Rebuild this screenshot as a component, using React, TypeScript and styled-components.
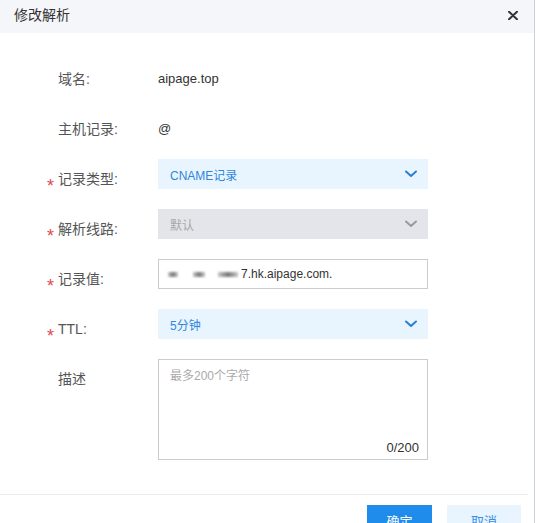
import React from "react";
import styled, { createGlobalStyle } from "styled-components";

const GlobalStyle = createGlobalStyle`
  html, body { margin: 0; padding: 0; background: #fff; }
  body {
    font-family: "Liberation Sans", "Noto Sans CJK SC", sans-serif;
    -webkit-font-smoothing: antialiased;
  }
  * { box-sizing: border-box; }
`;

const Dialog = styled.div`
  width: 535px;
  min-height: 523px;
  border-right: 1px solid #cfd0d2;
  background: #fff;
`;

const Header = styled.div`
  height: 33px;
  background: #f5f6fa;
  display: flex;
  align-items: center;
  justify-content: space-between;
  padding: 0 16px 3px 14px;
`;

const Title = styled.div`
  font-size: 14px;
  color: #333;
  line-height: 20px;
`;

const CloseButton = styled.button`
  width: 10px;
  height: 10px;
  border: 0;
  padding: 0;
  background: none;
  display: flex;
  align-items: center;
  justify-content: center;
  cursor: pointer;
`;

const Body = styled.div`
  padding-top: 26px;
  display: flex;
  flex-direction: column;
  gap: 20px;
`;

const Row = styled.div`
  display: flex;
  align-items: flex-start;
  min-height: 30px;
`;

const LabelCell = styled.div`
  width: 158px;
  height: 30px;
  padding: 10px 0 0 45px;
  display: flex;
  align-items: flex-start;
`;

const Star = styled.span`
  width: 13px;
  padding-left: 2px;
  margin-top: 14px;
  font-size: 18px;
  line-height: 6px;
  color: #e5484d;
`;

const LabelText = styled.span`
  font-size: 14px;
  line-height: 20px;
  color: #555;
`;

const ValueText = styled.div`
  padding-top: 10px;
  font-size: 13px;
  line-height: 20px;
  color: #333;
`;

const SelectBox = styled.div<{ $disabled?: boolean }>`
  width: 270px;
  height: 30px;
  display: flex;
  align-items: center;
  justify-content: space-between;
  padding: 0 11px 0 12px;
  font-size: 12px;
  background: ${(p) => (p.$disabled ? "#e3e5ea" : "#e9f5fe")};
  color: ${(p) => (p.$disabled ? "#a8a8a8" : "#2f86dc")};
`;

const Field = styled.div`
  width: 270px;
  height: 30px;
  border: 1px solid #cccccc;
  display: flex;
  align-items: center;
  padding-left: 9px;
  font-size: 12px;
  color: #333;
`;

const Mask = styled.span<{ $w: number; $gap: number }>`
  display: inline-block;
  width: ${(p) => p.$w}px;
  height: 5px;
  margin-right: ${(p) => p.$gap}px;
  background: linear-gradient(90deg, #c8c8c8, #777 50%, #c8c8c8);
  filter: blur(1.2px);
`;

const AreaWrap = styled.div`
  position: relative;
  width: 270px;
  height: 101px;
`;

const TextArea = styled.textarea`
  width: 100%;
  height: 100%;
  border: 1px solid #cccccc;
  resize: none;
  padding: 7px 11px;
  font-family: inherit;
  font-size: 12px;
  line-height: 18px;
  color: #333;
  outline: none;
  &::placeholder { color: #aaa; }
`;

const Counter = styled.span`
  position: absolute;
  right: 9px;
  bottom: 4px;
  font-size: 13px;
  line-height: 16px;
  color: #333;
`;

const Footer = styled.div`
  margin-top: 34px;
  margin-right: 6px;
  border-top: 1px solid #ebebeb;
  padding: 10px 7px 0 0;
  display: flex;
  justify-content: flex-end;
  gap: 15px;
`;

const Button = styled.button<{ $primary?: boolean; $w: number }>`
  width: ${(p) => p.$w}px;
  height: 30px;
  border: 0;
  padding: 0;
  font-family: inherit;
  font-size: 13px;
  background: ${(p) => (p.$primary ? "#1f8ceb" : "#e8f4fe")};
  color: ${(p) => (p.$primary ? "#fff" : "#3a8ee0")};
`;

const Chevron = ({ color }: { color: string }) => (
  <svg width="12" height="8" viewBox="0 0 12 8">
    <path d="M1 1.5 L6 6 L11 1.5" fill="none" stroke={color} strokeWidth="2" strokeLinecap="round" strokeLinejoin="round" />
  </svg>
);

const Label = ({ required, children }: { required?: boolean; children: React.ReactNode }) => (
  <LabelCell>
    <Star>{required ? "*" : ""}</Star>
    <LabelText>{children}</LabelText>
  </LabelCell>
);

export default function App() {
  return (
    <>
      <GlobalStyle />
      <Dialog>
        <Header>
          <Title>修改解析</Title>
          <CloseButton aria-label="close">
            <svg width="10" height="9" viewBox="0 0 10 9">
              <path d="M1 0.8 L9 8.2 M9 0.8 L1 8.2" stroke="#333" strokeWidth="2" strokeLinecap="round" />
            </svg>
          </CloseButton>
        </Header>
        <Body>
          <Row>
            <Label>域名:</Label>
            <ValueText>aipage.top</ValueText>
          </Row>
          <Row>
            <Label>主机记录:</Label>
            <ValueText>@</ValueText>
          </Row>
          <Row>
            <Label required>记录类型:</Label>
            <SelectBox>
              <span>CNAME记录</span>
              <Chevron color="#2b7fd6" />
            </SelectBox>
          </Row>
          <Row>
            <Label required>解析线路:</Label>
            <SelectBox $disabled>
              <span>默认</span>
              <Chevron color="#9a9a9a" />
            </SelectBox>
          </Row>
          <Row>
            <Label required>记录值:</Label>
            <Field>
              <Mask $w={10} $gap={15} />
              <Mask $w={12} $gap={13} />
              <Mask $w={20} $gap={3} />
              <span>7.hk.aipage.com.</span>
            </Field>
          </Row>
          <Row>
            <Label required>TTL:</Label>
            <SelectBox>
              <span>5分钟</span>
              <Chevron color="#2b7fd6" />
            </SelectBox>
          </Row>
          <Row>
            <Label>描述</Label>
            <AreaWrap>
              <TextArea placeholder="最多200个字符" />
              <Counter>0/200</Counter>
            </AreaWrap>
          </Row>
        </Body>
        <Footer>
          <Button $primary $w={65}>确定</Button>
          <Button $w={74}>取消</Button>
        </Footer>
      </Dialog>
    </>
  );
}
